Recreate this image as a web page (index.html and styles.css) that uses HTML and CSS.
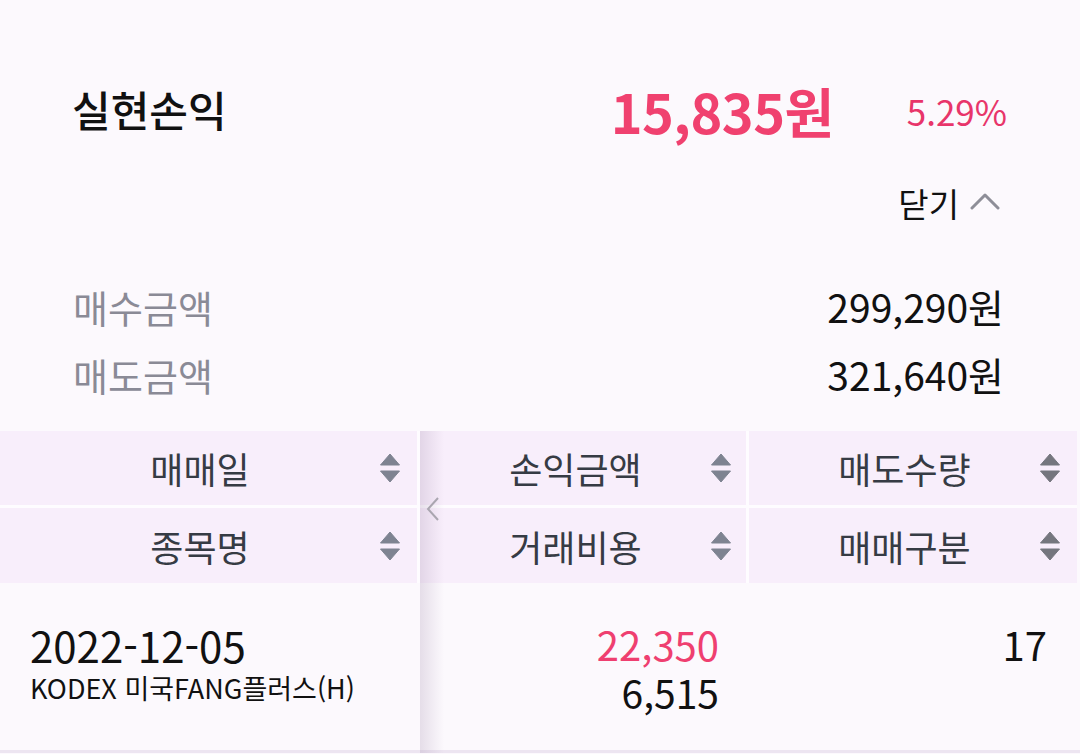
FILE: index.html
```html
<!DOCTYPE html>
<html lang="ko">
<head>
<meta charset="utf-8">
<link rel="stylesheet" href="styles.css">
</head>
<body>
<div class="page">
  <section class="summary">
    <div class="top-row">
      <h1 class="title">실현손익</h1>
      <span class="amount">15,835원</span>
      <span class="rate">5.29%</span>
    </div>
    <div class="close-row">
      <span class="close">닫기</span>
      <svg class="chev-up" width="30" height="18" viewBox="0 0 30 18"><path d="M2 16 L15 3 L28 16" fill="none" stroke="#8e8e98" stroke-width="3" stroke-linecap="round" stroke-linejoin="round"/></svg>
    </div>
    <div class="info-row first-info"><span class="label">매수금액</span><span class="value">299,290원</span></div>
    <div class="info-row"><span class="label">매도금액</span><span class="value">321,640원</span></div>
  </section>

  <section class="table">
    <div class="head">
      <div class="hcell"><span class="htext">매매일</span><svg class="sort" width="20" height="30" viewBox="0 0 20 30"><path d="M10 1 L19.5 12 L0.5 12 Z" fill="#7e8391" stroke="#7e8391" stroke-linejoin="round"/><path d="M0.5 18 L19.5 18 L10 29 Z" fill="#7e8391" stroke="#7e8391" stroke-linejoin="round"/></svg></div>
      <div class="hcell"><span class="htext">손익금액</span><svg class="sort" width="20" height="30" viewBox="0 0 20 30"><path d="M10 1 L19.5 12 L0.5 12 Z" fill="#7e8391" stroke="#7e8391" stroke-linejoin="round"/><path d="M0.5 18 L19.5 18 L10 29 Z" fill="#7e8391" stroke="#7e8391" stroke-linejoin="round"/></svg></div>
      <div class="hcell"><span class="htext">매도수량</span><svg class="sort" width="20" height="30" viewBox="0 0 20 30"><path d="M10 1 L19.5 12 L0.5 12 Z" fill="#75767e" stroke="#75767e" stroke-linejoin="round"/><path d="M0.5 18 L19.5 18 L10 29 Z" fill="#75767e" stroke="#75767e" stroke-linejoin="round"/></svg></div>
      <div class="hcell"><span class="htext">종목명</span><svg class="sort" width="20" height="30" viewBox="0 0 20 30"><path d="M10 1 L19.5 12 L0.5 12 Z" fill="#7e8391" stroke="#7e8391" stroke-linejoin="round"/><path d="M0.5 18 L19.5 18 L10 29 Z" fill="#7e8391" stroke="#7e8391" stroke-linejoin="round"/></svg></div>
      <div class="hcell"><span class="htext">거래비용</span><svg class="sort" width="20" height="30" viewBox="0 0 20 30"><path d="M10 1 L19.5 12 L0.5 12 Z" fill="#7e8391" stroke="#7e8391" stroke-linejoin="round"/><path d="M0.5 18 L19.5 18 L10 29 Z" fill="#7e8391" stroke="#7e8391" stroke-linejoin="round"/></svg></div>
      <div class="hcell"><span class="htext">매매구분</span><svg class="sort" width="20" height="30" viewBox="0 0 20 30"><path d="M10 1 L19.5 12 L0.5 12 Z" fill="#75767e" stroke="#75767e" stroke-linejoin="round"/><path d="M0.5 18 L19.5 18 L10 29 Z" fill="#75767e" stroke="#75767e" stroke-linejoin="round"/></svg></div>
    </div>
    <div class="body">
      <div class="bcell first">
        <div class="date">2022-12-05</div>
        <div class="name">KODEX 미국FANG플러스(H)</div>
      </div>
      <div class="bcell num">
        <div class="profit">22,350</div>
        <div class="cost">6,515</div>
      </div>
      <div class="bcell num">
        <div class="qty">17</div>
      </div>
    </div>
    <div class="shadow"></div>
    <svg class="nav-left" width="16" height="26" viewBox="0 0 16 26"><path d="M13 2 L3 13 L13 24" fill="none" stroke="#aaa6b0" stroke-width="2"/></svg>
  </section>
</div>
</body>
</html>
```

FILE: styles.css
```css
* { box-sizing: border-box; }
html, body { margin: 0; padding: 0; }
body {
  background: #fcf9fd;
  font-family: "Noto Sans CJK KR", "Noto Sans", sans-serif;
  color: #111;
  width: 1080px;
  height: 754px;
  overflow: hidden;
}
.summary { padding-top: 60px; }
.top-row {
  height: 100px;
  display: flex;
  align-items: center;
  padding: 0 73px 0 72px;
}
.title {
  flex: 1;
  margin: 0;
  margin-top: -4px;
  font-size: 42px;
  font-weight: 500;
  color: #111;
}
.amount {
  font-size: 54px;
  font-weight: 700;
  color: #f0416f;
  letter-spacing: -0.5px;
}
.rate {
  margin-left: 73px;
  font-size: 35px;
  color: #e8356a;
}
.close-row {
  margin-top: 13px;
  height: 60px;
  display: flex;
  align-items: center;
  justify-content: flex-end;
  padding-right: 80px;
  gap: 11px;
}
.close { font-size: 33px; color: #111; }
.chev-up { margin-top: -4px; }
.info-row {
  height: 68px;
  display: flex;
  align-items: center;
  justify-content: space-between;
  padding: 0 76px 0 73px;
}
.first-info { margin-top: 39px; }
.label { font-size: 38px; color: #8a8a96; }
.value { font-size: 39px; color: #111; }

.table {
  position: relative;
  margin-top: 23px;
}
.head {
  display: grid;
  grid-template-columns: 417px 326px 328px;
  grid-template-rows: 74px 75px;
  column-gap: 3px;
  row-gap: 3px;
  background: #fefcff;
  width: 1077px;
}
.hcell {
  background: #f8eefb;
  display: flex;
  align-items: center;
  padding: 0 17px 0 20px;
}
.hcell:nth-child(2), .hcell:nth-child(5) { padding-right: 15px; }
.htext {
  flex: 1;
  text-align: center;
  font-size: 36px;
  color: #363b44;
}
.sort { flex: none; }
.body {
  display: grid;
  grid-template-columns: 420px 326px 334px;
  height: 170px;
  border-bottom: 3px solid #ede5f1;
}
.bcell { padding-top: 37px; }
.first { padding-left: 30px; }
.num { text-align: right; padding-right: 27px; }
.num:last-child { padding-right: 33px; }
.date { font-size: 42px; line-height: 50px; color: #111; }
.name { font-size: 27px; line-height: 36px; color: #111; }
.profit { font-size: 40px; line-height: 48px; color: #ef3f70; }
.cost { font-size: 39px; line-height: 48px; color: #111; }
.qty { font-size: 40px; line-height: 48px; color: #111; }
.shadow {
  position: absolute;
  left: 420px;
  top: 0;
  bottom: 0;
  width: 24px;
  background: linear-gradient(to right, rgba(170, 150, 180, 0.28), rgba(200, 180, 210, 0));
  pointer-events: none;
}
.nav-left {
  position: absolute;
  left: 425px;
  top: 65px;
}
```
